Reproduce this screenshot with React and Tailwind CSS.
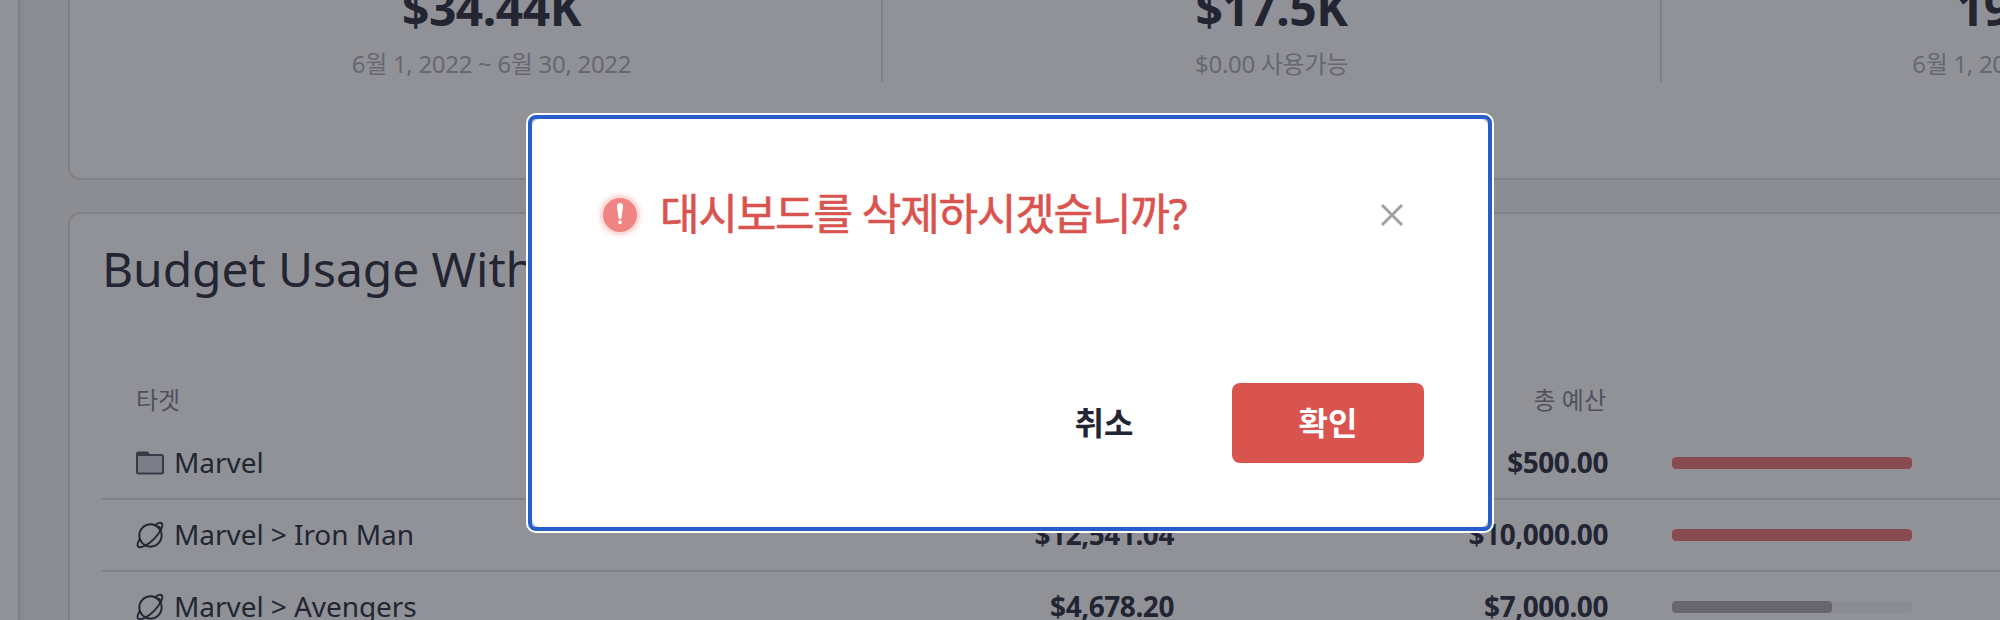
const metrics = [
  { value: "$34.44K", note: "6월 1, 2022 ~ 6월 30, 2022" },
  { value: "$17.5K", note: "$0.00 사용가능" },
  { value: "196.81%", note: "6월 1, 2022 ~ 6월 30, 2022" },
];

const rows = [
  { name: "Marvel", type: "group", used: "$2,104.10", total: "$500.00", percent: 100, over: true },
  { name: "Marvel > Iron Man", type: "project", used: "$12,541.04", total: "$10,000.00", percent: 100, over: true },
  { name: "Marvel > Avengers", type: "project", used: "$4,678.20", total: "$7,000.00", percent: 66.7, over: false },
];

function FolderIcon() {
  return (
    <svg width="28" height="28" viewBox="0 0 28 28" className="block">
      <path d="M0 5a2.500 2.500 0 0 1 2.500-2.500h8.500a2 2 0 0 1 1.400.6L15 6.500H0z" fill="#383a47" />
      <rect x="1" y="6" width="26" height="18.500" rx="1.5" fill="#7d7d88" stroke="#383a47" strokeWidth="2" />
    </svg>
  );
}

function PlanetIcon() {
  return (
    <svg width="28" height="28" viewBox="0 0 28 28" fill="none" stroke="#232533" strokeWidth="1.9" className="block">
      <circle cx="14.5" cy="14.500" r="11.2" />
      <path d="M19.500 3.800C22.500 1.700 25 1.200 25.900 2.500c1.700 2.500-2 9.300-7.800 15.300S4.500 27.600 2.300 25.800c-1.300-1.200-.7-4.200 1.200-7.300" />
      <path d="M21.500 5.800c1.500-.5 2.800.2 2.500 2" />
    </svg>
  );
}

function AlertIcon() {
  return (
    <svg width="48" height="48" viewBox="0 0 48 48" className="block">
      <circle cx="24" cy="24" r="23" fill="#fef3f2" />
      <circle cx="24" cy="24" r="20" fill="#fbdcdb" />
      <circle cx="24" cy="24" r="17" fill="#ef8482" />
      <path d="M24 12c2 0 3.100 1.300 3 3.500L25.600 26c-.2 1.500-.7 2.200-1.600 2.200s-1.400-.7-1.600-2.200L21 15.500c-.1-2.200 1-3.500 3-3.500z" fill="#fff" />
      <circle cx="24" cy="31.200" r="1.900" fill="#fff" />
    </svg>
  );
}

export default function App() {
  return (
    <div className="relative flex h-[620px] w-[2000px] overflow-hidden bg-[#8c8d92] font-['Noto_Sans','Noto_Sans_CJK_KR',sans-serif] text-[#232533]">
      <aside className="w-5 shrink-0 border-r-2 border-[#808186] bg-[#919297] shadow-[2px_0_6px_rgba(0,0,0,0.05)]" />
      <main className="ml-12 flex w-[2408px] shrink-0 flex-col gap-8">
        <section className="h-[180px] shrink-0 rounded-b-xl border-2 border-t-0 border-[#808186] bg-[#919297] px-8">
          <div className="grid h-[82px] grid-cols-[781px_779px_780px] divide-x-2 divide-[#808186]">
            {metrics.map((m, i) => (
              <div key={i} className="flex h-[82px] flex-col items-center justify-end pb-[3px]">
                <span className="text-[48px] font-bold leading-[52px] tracking-[-0.5px]">{m.value}</span>
                <span className="mt-[15px] text-[24px] leading-[30px] tracking-[-0.3px] text-[#666772]">{m.note}</span>
              </div>
            ))}
          </div>
        </section>
        <section className="h-[800px] shrink-0 rounded-xl border-2 border-[#808186] bg-[#919297] px-8">
          <h2 className="mt-[23px] text-[48px] leading-[64px] tracking-[-0.1px]">Budget Usage With Target</h2>
          <div className="mb-1 mt-[75px] flex h-12 items-center pl-[34px] text-[24px] text-[#50505e]">
            <span className="w-[600px]">타겟</span>
            <span className="w-[438px] text-right">사용</span>
            <span className="w-[432px] text-right">총 예산</span>
          </div>
          {rows.map((r) => (
            <div key={r.name} className="flex h-[72px] items-center border-b-2 border-[#808186] pl-[34px] text-[28px]">
              <span className="flex w-[600px] items-center gap-2.5">
                {r.type === "group" ? <FolderIcon /> : <PlanetIcon />}
                <span className="pb-0.5 tracking-[-0.06px]">{r.name}</span>
              </span>
              <span className="w-[438px] pb-0.5 text-right font-bold tracking-[-0.45px]">{r.used}</span>
              <span className="w-[434px] pb-0.5 text-right font-bold tracking-[-0.45px]">{r.total}</span>
              <div className="ml-16 h-3 w-60 overflow-hidden rounded bg-[#8c8d92]">
                <div className={r.over ? "h-3 rounded bg-[#884b50]" : "h-3 rounded bg-[#666570]"} style={{ width: r.percent + "%" }} />
              </div>
            </div>
          ))}
        </section>
      </main>

      <div role="dialog" className="absolute left-[526px] top-[113px] h-[420px] w-[968px] rounded-[10px] bg-white p-0.5">
        <div className="h-full rounded-lg border-4 border-[#275fca] bg-[#c8c9cd]">
          <div className="h-full rounded-lg bg-white px-16 pt-[72px]">
            <div className="flex h-12 items-center">
              <AlertIcon />
              <h1 className="ml-4 grow pb-0.5 text-[43px] leading-[48px] tracking-[-1.2px] text-[#d9534f] [-webkit-text-stroke:0.6px_#d9534f]">대시보드를 삭제하시겠습니까?</h1>
              <svg width="28" height="28" viewBox="0 0 28 28" className="mr-[18px]" stroke="#a0a1a8" strokeWidth="3">
                <path d="M4 4l20 20M24 4l-20 20" />
              </svg>
            </div>
            <div className="mt-36 flex h-20 justify-end gap-8 text-[32px] font-bold">
              <button className="w-48">취소</button>
              <button className="w-48 rounded-lg bg-[#d9534f] text-white">확인</button>
            </div>
          </div>
        </div>
      </div>
    </div>
  );
}
